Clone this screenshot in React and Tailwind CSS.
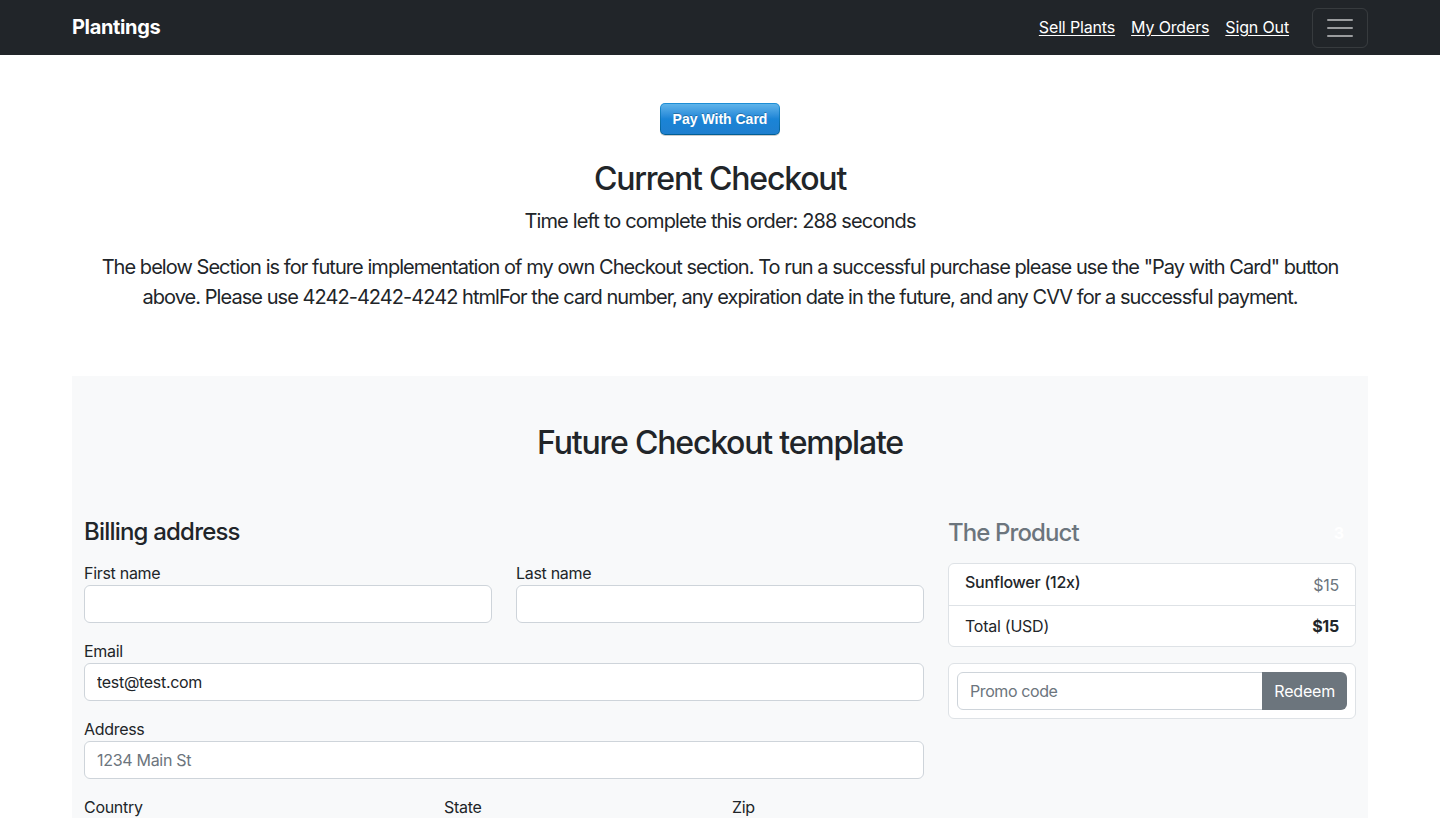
import React from "react";

const font = { fontFamily: "Inter, 'Noto Sans', sans-serif" };

function Field({ label, value, placeholder }) {
  return (
    <div>
      <label className="block text-[16px] leading-[24px] tracking-[-0.3px] text-[#212529]">{label}</label>
      <input
        defaultValue={value}
        placeholder={placeholder}
        className="block w-full h-[38px] px-3 text-[16px] tracking-[-0.3px] text-[#212529] placeholder:text-[#6c757d] bg-white border border-[#ced4da] rounded-[6px] outline-none"
      />
    </div>
  );
}

export default function App() {
  return (
    <div className="min-h-screen bg-white text-[#212529]" style={font}>
      {/* NAVBAR */}
      <nav className="h-[55px] bg-[#212529] flex items-center">
        <div className="w-[1296px] mx-auto flex items-center justify-between">
          <a className="text-white text-[20px] font-bold tracking-[-0.35px] -mt-px">Plantings</a>
          <div className="flex items-center text-[16px] tracking-[-0.15px] leading-[24px]">
            <a className="text-white underline underline-offset-2 mr-4 -mt-px">Sell Plants</a>
            <a className="text-white underline underline-offset-2 mr-4 -mt-px">My Orders</a>
            <a className="text-white underline underline-offset-2 -mt-px">Sign Out</a>
            <button className="ml-[23px] px-3 py-1 border border-white/10 rounded-[6px]">
              <svg width="30" height="30" viewBox="0 0 30 30" className="block">
                <path
                  d="M3 7h24M3 15h24M3 23h24"
                  stroke="rgba(255,255,255,0.55)"
                  strokeWidth="2"
                  strokeLinecap="round"
                />
              </svg>
            </button>
          </div>
        </div>
      </nav>

      {/* CHECKOUT HEADER */}
      <div className="w-[1296px] mx-auto text-center">
        <div className="pt-[48px] flex justify-center">
          <button className="p-px rounded-[5px] bg-gradient-to-b from-[#1e8fd6] to-[#015e94] shadow-[0_1px_0_rgba(0,0,0,0.2)]">
            <span className="block h-[30px] px-3 leading-[30px] rounded-[4px] bg-gradient-to-b from-[#5fb4ea] via-[#1a84d6] to-[#1f7fcf] text-white text-[14px] font-bold [text-shadow:0_-1px_0_rgba(0,0,0,0.25)]" style={{ fontFamily: "'Liberation Sans', Arial, sans-serif" }}>
              Pay With Card
            </span>
          </button>
        </div>
        <h1 className="mt-[25px] text-[32px] leading-[38px] font-medium tracking-[-1.2px]">Current Checkout</h1>
        <p className="mt-[8px] text-[20px] leading-[30px] tracking-[-0.85px]">Time left to complete this order: 288 seconds</p>
        <p className="mt-[16px] text-[20px] leading-[30px] tracking-[-0.95px] px-3">
          The below Section is for future implementation of my own Checkout section. To run a successful purchase please use the "Pay with Card" button above. Please use 4242-4242-4242 htmlFor the card number, any expiration date in the future, and any CVV for a successful payment.
        </p>
      </div>

      {/* FUTURE CHECKOUT */}
      <div className="w-[1296px] mx-auto mt-[64px] bg-[#f8f9fa] px-3 pb-12">
        <div className="pt-[48px] pb-[56px] text-center">
          <h2 className="text-[32px] leading-[38px] font-medium tracking-[-1.2px]">Future Checkout template</h2>
        </div>

        <div className="flex gap-6">
          {/* BILLING */}
          <div className="w-[840px]">
            <h4 className="text-[24px] leading-[29px] font-medium tracking-[-0.8px] -mt-px mb-[15px]">Billing address</h4>
            <div className="grid grid-cols-2 gap-x-6 gap-y-4">
              <Field label="First name" />
              <Field label="Last name" />
              <div className="col-span-2">
                <Field label="Email" value="test@test.com" />
              </div>
              <div className="col-span-2">
                <Field label="Address" placeholder="1234 Main St" />
              </div>
            </div>
            <div className="grid grid-cols-[336px_264px_192px] gap-x-6 mt-4">
              <div>
                <label className="block text-[16px] leading-[24px] tracking-[-0.3px]">Country</label>
                <select className="block w-full h-[38px] px-3 bg-white border border-[#ced4da] rounded-[6px]">
                  <option>Choose...</option>
                </select>
              </div>
              <div>
                <label className="block text-[16px] leading-[24px] tracking-[-0.3px]">State</label>
                <select className="block w-full h-[38px] px-3 bg-white border border-[#ced4da] rounded-[6px]">
                  <option>Choose...</option>
                </select>
              </div>
              <Field label="Zip" />
            </div>
          </div>

          {/* PRODUCT */}
          <div className="w-[408px]">
            <h4 className="flex justify-between items-center mb-[16px]">
              <span className="text-[24px] leading-[29px] font-medium tracking-[-0.9px] text-[#6c757d]">The Product</span>
              <span className="text-white text-[16px] font-bold mr-3">3</span>
            </h4>
            <ul className="bg-white border border-[#dee2e6] rounded-[6px] text-[16px] tracking-[-0.25px]">
              <li className="flex justify-between px-4 py-2 leading-[24px]">
                <h6 className="font-medium -mt-[2px]">Sunflower (12x)</h6>
                <span className="text-[#6c757d] mt-[1px]">$15</span>
              </li>
              <li className="flex justify-between px-4 py-2 leading-[24px] border-t border-[#dee2e6]">
                <span>Total (USD)</span>
                <strong className="font-bold">$15</strong>
              </li>
            </ul>
            <form className="mt-4 p-2 bg-white border border-[#dee2e6] rounded-[6px] flex">
              <input
                placeholder="Promo code"
                className="flex-1 min-w-0 h-[38px] px-3 text-[16px] tracking-[-0.4px] placeholder:text-[#6c757d] border border-[#ced4da] rounded-l-[6px] outline-none"
              />
              <button className="h-[38px] px-3 text-[16px] tracking-[-0.2px] text-white bg-[#6c757d] rounded-r-[6px] -ml-px">Redeem</button>
            </form>
          </div>
        </div>
      </div>
    </div>
  );
}
